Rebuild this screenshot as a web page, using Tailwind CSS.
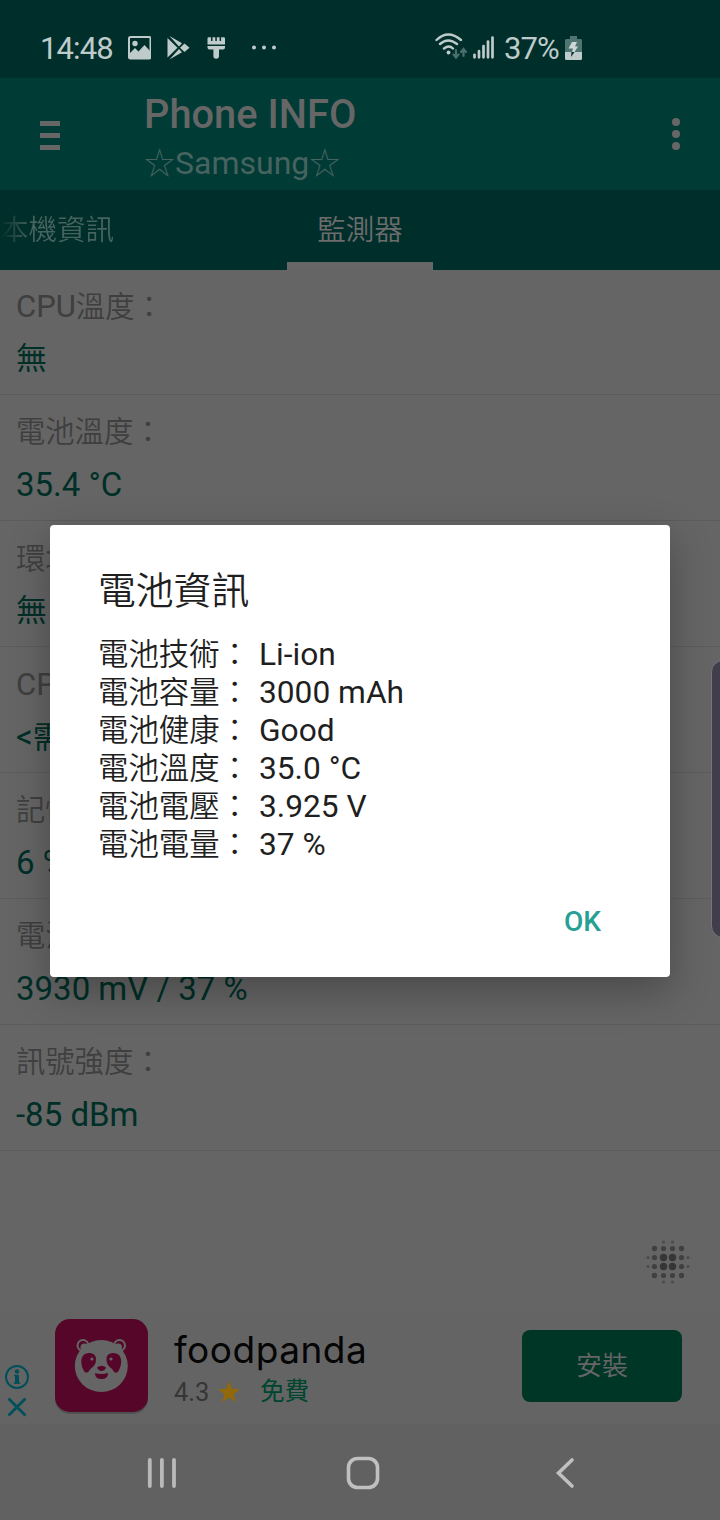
<!DOCTYPE html>
<html lang="zh-Hant">
<head>
    <meta charset="UTF-8">
    <meta name="viewport" content="width=device-width, initial-scale=1.0">
    <title>Phone INFO</title>
    <script src="https://cdn.jsdelivr.net/npm/@tailwindcss/browser@4"></script>
</head>
<body class="bg-[#656565]">
    <div class="relative w-[720px] h-[1520px] overflow-hidden flex flex-col bg-[#656565] font-['Roboto','Noto_Sans_CJK_TC',sans-serif] whitespace-nowrap">

        <!-- Status bar -->
        <div class="h-[78px] shrink-0 bg-[#002f2b] text-[#bfcbca] flex items-center pt-[18px] pl-10 text-[31px]">
            <span class="w-[87px] tracking-[-0.9px] pt-[2px]">14:48</span>
            <svg class="w-6 h-6" viewBox="0 0 24 24" fill="none">
                <rect x="2" y="1" width="21.5" height="21.5" rx="1.5" stroke="currentColor" stroke-width="2"/>
                <circle cx="8" cy="7.5" r="2.7" fill="currentColor"/>
                <path d="M3 17l5-5 3.500 3.500 6-6.500 5.500 6v7H3z" fill="currentColor"/>
            </svg>
            <svg class="w-6 h-6 ml-[15px]" viewBox="0 0 24 24" fill="currentColor">
                <path d="M1.500 2v19.500L11.500 11.700z"/>
                <path d="M3.500 0l12.500 7.300-3 3.100zM3.500 23.500l12.500-7.300-3-3.100z"/>
                <path d="M14 11.700l4.500-4.300 5 4.300-5 4.300z"/>
            </svg>
            <svg class="w-6 h-6 ml-[16px]" viewBox="0 0 24 24" fill="currentColor">
                <path d="M1.500 2.500q0-1.300 1.300-1.300H5V5h1.500V1.200H9.300V5h1.500V1.200h2.800V5h1.500V1.200h2.600Q19 1.200 19 2.500v6H1.500z"/>
                <path d="M1.500 10H19v1.500q0 2-2 2h-4V20a2.800 2.800 0 0 1-5.600 0v-6.500H3.500q-2 0-2-2z"/>
            </svg>
            <svg class="w-7 h-6 ml-[20px]" viewBox="0 0 28 24" fill="currentColor">
                <circle cx="4" cy="11.500" r="2"/><circle cx="14" cy="11.500" r="2"/><circle cx="24" cy="11.500" r="2"/>
            </svg>
            <svg class="w-8 h-7 ml-[157px] mt-[-4px]" viewBox="0 0 32 28" fill="none" stroke="currentColor" stroke-width="2.4" stroke-linecap="round">
                <path d="M1.500 8Q13-3 26 8M5 12q8-7 17 0M9 16.500q5-4 9 0"/>
                <circle cx="13.500" cy="20.500" r="1.900" fill="currentColor" stroke="none"/>
                <path d="M21 18v7M18.500 22.500L21 25.500l2.500-3M28.500 24v-6.500M26 20l2.500-3 2.500 3" stroke="#4a6f6b" stroke-width="2.200"/>
            </svg>
            <svg class="w-[22px] h-6 ml-[6px]" viewBox="0 0 22 24" stroke="currentColor" stroke-width="2.700" stroke-linecap="round">
                <path d="M1.500 18.800v2.500M6 15.200v6.100M10.500 10v11.300M15 5.500v15.800M19.500 1.500v19.800"/>
            </svg>
            <span class="ml-[9px] w-[61px] tracking-[-0.9px] pt-[2px]">37%</span>
            <svg class="w-[17px] h-6" viewBox="0 0 17 24">
                <path d="M5 0h7v3h3.500Q17 3 17 4.500V16H0V4.500Q0 3 1.500 3H5z" fill="#4f7572"/>
                <path d="M0 16h17v6.500Q17 24 15.500 24h-14Q0 24 0 22.500z" fill="currentColor"/>
                <path d="M7 6h5l-2 4.500h3L9.500 16H7l1-3.500H3.500z" fill="#cdd7d6"/>
                <path d="M6.500 16h3L6 21z" fill="#002f2b"/>
            </svg>
        </div>

        <!-- App bar -->
        <div class="h-[112px] shrink-0 bg-[#003b35] text-[#666] flex">
            <div class="w-[144px] pl-10 pt-[43px] flex flex-col gap-[7px]">
                <div class="w-5 h-[5px] bg-[#666]"></div>
                <div class="w-5 h-[5px] bg-[#666]"></div>
                <div class="w-5 h-[5px] bg-[#666]"></div>
            </div>
            <div class="flex-1 pt-[14px]">
                <h1 class="text-[39.800px] leading-[46px] font-medium">Phone INFO</h1>
                <p class="text-[32px] leading-[50px] text-[#476360]"><span class="text-[31px] font-light">☆</span>Samsung<span class="text-[31px] font-light">☆</span></p>
            </div>
            <div class="w-[48px] pt-[40px] flex flex-col gap-1">
                <div class="size-2 rounded-full bg-[#666]"></div>
                <div class="size-2 rounded-full bg-[#666]"></div>
                <div class="size-2 rounded-full bg-[#666]"></div>
            </div>
        </div>

        <!-- Tabs -->
        <div class="h-[80px] shrink-0 bg-[#002f2b] flex text-[28.500px] leading-[80px] font-[350]">
            <div class="w-[287px] pt-[1px]"><span class="bg-gradient-to-r from-[#002f2b] to-[#476360] to-[32px] bg-clip-text text-transparent">本機資訊</span></div>
            <div class="w-[146px] pt-[1px] text-center text-[#6c6c6c] border-b-8 border-[#666]">監測器</div>
        </div>

        <!-- Sensor list -->
        <div class="h-[1042px] shrink-0 text-[#3f3f3f] text-[29.300px]">
            <div class="h-[125px] border-b border-[#5c5c5c] pl-4 pt-[11px]">
                <p class="leading-[52px]"><span class="text-[31px]">CPU</span><span class="font-[350]">溫度：</span></p>
                <p class="leading-[52px] text-[31px] text-[#002f27]">無</p>
            </div>
            <div class="h-[126px] border-b border-[#5c5c5c] pl-4 pt-[11px]">
                <p class="leading-[53px] font-[350]">電池溫度：</p>
                <p class="leading-[52px] text-[33px] text-[#002f27]">35.4 °C</p>
            </div>
            <div class="h-[126px] border-b border-[#5c5c5c] pl-4 pt-[12px]">
                <p class="leading-[52px] font-[350]">環境</p>
                <p class="leading-[52px] text-[31px] text-[#002f27]">無</p>
            </div>
            <div class="h-[126px] border-b border-[#5c5c5c] pl-4 pt-[12px]">
                <p class="leading-[52px] text-[31px]">CPU</p>
                <p class="leading-[52px] text-[31px] text-[#002f27]"><span class="text-[33px]">&lt;</span>需</p>
            </div>
            <div class="h-[126px] border-b border-[#5c5c5c] pl-4 pt-[11px]">
                <p class="leading-[53px] font-[350]">記憶</p>
                <p class="leading-[52px] text-[33px] text-[#002f27]">6 %</p>
            </div>
            <div class="h-[126px] border-b border-[#5c5c5c] pl-4 pt-[11px]">
                <p class="leading-[53px] font-[350]">電池</p>
                <p class="leading-[52px] text-[33px] text-[#002f27]">3930 mV / 37 %</p>
            </div>
            <div class="h-[126px] border-b border-[#5c5c5c] pl-4 pt-[11px]">
                <p class="leading-[53px] font-[350]">訊號強度：</p>
                <p class="leading-[52px] text-[33px] text-[#002f27]">-85 dBm</p>
            </div>
            <div class="flex justify-end pr-[30px] pt-[89px]">
                <svg class="w-[44px] h-[44px]" viewBox="0 0 44 44" fill="#404040">
                    <g fill="#363636">
                        <circle cx="17.500" cy="17.500" r="3.700"/><circle cx="26.500" cy="17.500" r="3.700"/><circle cx="17.500" cy="26.500" r="3.700"/><circle cx="26.500" cy="26.500" r="3.700"/>
                    </g>
                    <circle cx="8.500" cy="8.500" r="2.700"/><circle cx="17.500" cy="8.500" r="2.600"/><circle cx="26.500" cy="8.500" r="2.600"/><circle cx="35.500" cy="8.500" r="2.700"/>
                    <circle cx="8.500" cy="17.500" r="2.600"/><circle cx="35.500" cy="17.500" r="2.600"/><circle cx="8.500" cy="26.500" r="2.600"/><circle cx="35.500" cy="26.500" r="2.600"/>
                    <circle cx="8.500" cy="35.500" r="2.700"/><circle cx="17.500" cy="35.500" r="2.600"/><circle cx="26.500" cy="35.500" r="2.600"/><circle cx="35.500" cy="35.500" r="2.700"/>
                    <g fill="#4a4a4a">
                        <circle cx="17.500" cy="2" r="1.500"/><circle cx="26.500" cy="2" r="1.500"/><circle cx="17.500" cy="42" r="1.500"/><circle cx="26.500" cy="42" r="1.500"/>
                        <circle cx="2" cy="17.500" r="1.500"/><circle cx="2" cy="26.500" r="1.500"/><circle cx="42" cy="17.500" r="1.500"/><circle cx="42" cy="26.500" r="1.500"/>
                    </g>
                </svg>
            </div>
        </div>

        <!-- Ad banner -->
        <div class="h-[112px] shrink-0 bg-[#646464] flex">
            <div class="w-[54px] pl-1 pt-[52px]">
                <svg class="w-[26px] h-[56px]" viewBox="0 0 26 56" fill="none" stroke="#00505a" stroke-width="2">
                    <circle cx="13" cy="13" r="11"/>
                    <path d="M13 11v8.500" stroke-width="4"/><path d="M10 11.500h4M9.800 19h6.400" stroke-width="1.600"/>
                    <circle cx="13" cy="7.500" r="2.200" fill="#00505a" stroke="none"/>
                    <path d="M4.500 34.500l17 17M21.500 34.500l-17 17" stroke-width="2.800"/>
                </svg>
            </div>
            <svg class="w-[95px] h-[100px] mt-[6px]" viewBox="0 0 95 100">
                <rect x="1" y="3" width="93" height="93" rx="15" fill="#505050"/>
                <rect x="1" y="1" width="93" height="93" rx="15" fill="#560628"/>
                <g fill="#560628" stroke="#656565" stroke-width="2">
                    <circle cx="29" cy="27.500" r="5.500"/><circle cx="65.500" cy="27.500" r="5.500"/>
                </g>
                <g fill="#656565">
                    <circle cx="30.500" cy="29.500" r="4"/><circle cx="64" cy="29.500" r="4"/>
                    <ellipse cx="47.300" cy="48" rx="26.500" ry="26"/>
                </g>
                <g fill="#560628">
                    <path d="M42 41c0 8-5 8-7 12-1 2-4 2-5 0-5-9-3-18 5-18 4 0 7 2 7 6zM52.500 41c0 8 5 8 7 12 1 2 4 2 5 0 5-9 3-18-5-18-4 0-7 2-7 6z"/>
                    <path d="M43 49.500q4.500-3.500 9 0-1.500 3.500-4.500 3.500T43 49.500zM41 55q6 2 13 0 0 6-6.500 6T41 55z"/>
                </g>
                <g fill="#656565"><circle cx="38" cy="41" r="1.600"/><circle cx="57" cy="41" r="1.600"/></g>
            </svg>
            <div class="w-[373px] pl-[25px] pt-[13px]">
                <p class="font-['Inter',sans-serif] text-[37px] leading-[49px] tracking-[0.5px] text-[#050505]">foodpanda</p>
                <div class="flex items-center h-[36px]">
                    <span class="w-[44px] text-[25.500px] text-[#363636]">4.3</span>
                    <svg class="w-[22px] h-[22px]" viewBox="0 0 22 22" fill="#91690a"><path d="M11 0l3 7.800 8 .4-6.300 5 2.200 8L11 16.600 4.100 21.200l2.200-8L0 8.200l8-.4z"/></svg>
                    <span class="ml-[20px] text-[24.600px] text-[#00452f]">免費</span>
                </div>
            </div>
            <div class="w-[160px] h-[72px] mt-[18px] rounded-lg bg-[#003626] text-[#666] text-[26px] leading-[72px] text-center font-[350]">安裝</div>
        </div>

        <!-- Navigation bar -->
        <div class="flex-1 bg-[#616161] flex items-center pt-[1px]">
            <svg class="w-[30px] h-[32px] ml-[147px]" viewBox="0 0 30 32" stroke="#b9b9b9" stroke-width="3.800" stroke-linecap="round">
                <path d="M2.800 3v26M14.900 3v26M27 3v26"/>
            </svg>
            <svg class="w-[34px] h-[34px] ml-[169px]" viewBox="0 0 34 34" fill="none" stroke="#c0c0c0" stroke-width="3.600">
                <rect x="2.500" y="2.500" width="29" height="29" rx="9"/>
            </svg>
            <svg class="w-5 h-8 ml-[175px]" viewBox="0 0 20 32" fill="none" stroke="#c0c0c0" stroke-width="3.600" stroke-linecap="round">
                <path d="M17 3L3.500 16 17 29"/>
            </svg>
        </div>

        <!-- Edge panel handle -->
        <div class="absolute left-[711px] top-[660px] w-[24px] h-[278px] rounded-xl border border-[#77757c] bg-[#413d4b]"></div>

        <!-- Battery dialog -->
        <div class="absolute left-[50px] top-[525px] w-[620px] h-[452px] rounded-[4px] bg-white text-[#1f1f1f] px-[49px] pt-[39px] shadow-[0_14px_40px_rgba(0,0,0,0.28)]">
            <h2 class="text-[37.800px] leading-[54px] font-[350] -ml-px">電池資訊</h2>
            <div class="mt-[18px] text-[31.700px] leading-[38px] grid grid-cols-[160px_1fr] [&>*:nth-child(odd)]:text-[30.400px] [&>*:nth-child(odd)]:font-[350] [&>*:nth-child(odd)]:-ml-px">
                <span>電池技術：</span><span>Li-ion</span>
                <span>電池容量：</span><span>3000 mAh</span>
                <span>電池健康：</span><span>Good</span>
                <span>電池溫度：</span><span>35.0 °C</span>
                <span>電池電壓：</span><span>3.925 V</span>
                <span>電池電量：</span><span>37 %</span>
            </div>
            <p class="mt-[38px] pl-[465px] text-[28px] leading-[40px] font-medium text-[#26a095]">OK</p>
        </div>
    </div>
</body>
</html>
